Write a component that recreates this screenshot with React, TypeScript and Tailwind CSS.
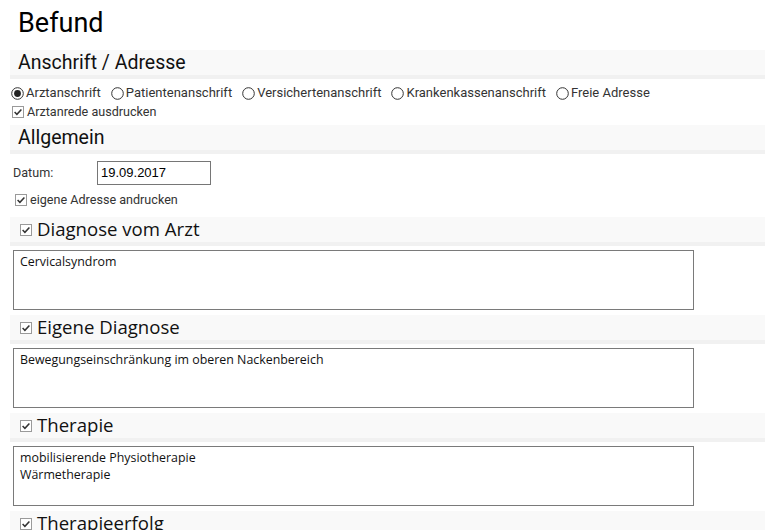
import React from "react";

const roboto = { fontFamily: "Roboto, 'Liberation Sans', sans-serif" };
const segoe = { fontFamily: "'Open Sans', 'Noto Sans', sans-serif" };

function Check({ className = "" }: { className?: string }) {
  return (
    <svg width="12" height="12" viewBox="0 0 12 12" className={"shrink-0 " + className}>
      <rect x="0.5" y="0.5" width="11" height="11" fill="#fff" stroke="#9a9a9a" />
      <path d="M2.6 6 L4.9 8.3 L9.4 3.4" fill="none" stroke="#333" strokeWidth="1.5" />
    </svg>
  );
}

function Radio({ checked }: { checked?: boolean }) {
  return (
    <svg width="13" height="13" viewBox="0 0 13 13" className="shrink-0">
      <circle cx="6.5" cy="6.5" r="5.8" fill="#fff" stroke="#333" strokeWidth="1" />
      {checked && <circle cx="6.5" cy="6.5" r="3.4" fill="#222" />}
    </svg>
  );
}

function Bar({ children }: { children: React.ReactNode }) {
  return (
    <div className="h-[29px] bg-[#f9f9f9] border-b-[4px] border-[#f1f1f1] flex items-center">
      {children}
    </div>
  );
}

function CheckSection({ title, lines }: { title: string; lines: string[] }) {
  return (
    <div className="mt-[5px]">
      <Bar>
        <div className="flex items-center pl-[10px] gap-[5px]">
          <Check />
          <span style={segoe} className="text-[18.6px] text-[#111] leading-none">
            {title}
          </span>
        </div>
      </Bar>
      <div
        style={segoe}
        className="mt-[4px] ml-[3px] w-[681px] h-[60px] border border-[#7a7a7a] px-[6px] pt-[2px] text-[12.4px] leading-[17px] text-[#111]"
      >
        {lines.map((l, i) => (
          <div key={i}>{l}</div>
        ))}
      </div>
    </div>
  );
}

export default function App() {
  return (
    <div className="w-[775px] h-[530px] overflow-hidden bg-white px-[10px]" style={roboto}>
      <div className="h-[50px] pl-[8px] pt-[6px] text-[27px] leading-[34px] text-black">Befund</div>
      <Bar>
        <span className="pl-[8px] text-[19.5px] text-[#111] leading-none">Anschrift / Adresse</span>
      </Bar>
      <div className="mt-[7px] h-[14px] flex items-center text-[13px] text-[#333] gap-[10px] pl-[1px]">
        {[
          ["Arztanschrift", true],
          ["Patientenanschrift", false],
          ["Versichertenanschrift", false],
          ["Krankenkassenanschrift", false],
          ["Freie Adresse", false],
        ].map(([l, c]) => (
          <label key={l as string} className="flex items-center gap-[2px]">
            <Radio checked={c as boolean} />
            <span>{l as string}</span>
          </label>
        ))}
      </div>
      <div className="mt-[5px] h-[14px] flex items-center text-[12.6px] text-[#333] gap-[3px] pl-[2px]">
        <Check />
        <span>Arztanrede ausdrucken</span>
      </div>
      <div className="mt-[6px]">
        <Bar>
          <span className="pl-[8px] text-[19.5px] text-[#111] leading-none">Allgemein</span>
        </Bar>
      </div>
      <div className="mt-[7px] h-[24px] flex items-center text-[13px]">
        <span className="w-[87px] pl-[3px] text-[12.6px] text-[#333]">Datum:</span>
        <div
          className="w-[114px] h-[24px] border border-[#767676] flex items-center pl-[3px] text-[13px] text-black"
          style={{ fontFamily: "'Liberation Sans', Arial, sans-serif" }}
        >
          19.09.2017
        </div>
      </div>
      <div className="mt-[8px] h-[14px] flex items-center text-[12.6px] text-[#333] gap-[3px] pl-[5px]">
        <Check />
        <span>eigene Adresse andrucken</span>
      </div>
      <div className="mt-[10px]">
        <CheckSection title="Diagnose vom Arzt" lines={["Cervicalsyndrom"]} />
        <CheckSection title="Eigene Diagnose" lines={["Bewegungseinschränkung im oberen Nackenbereich"]} />
        <CheckSection title="Therapie" lines={["mobilisierende Physiotherapie", "Wärmetherapie"]} />
        <CheckSection title="Therapieerfolg" lines={[""]} />
      </div>
    </div>
  );
}
